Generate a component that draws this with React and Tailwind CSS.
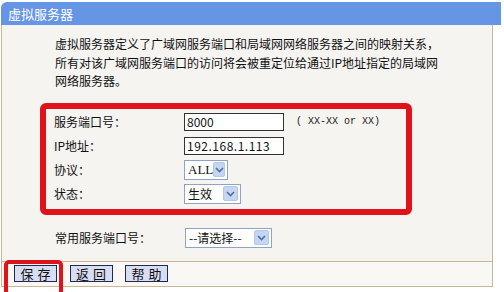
import React from "react";

function Arrow() {
  return (
    <span className="flex h-[15px] w-[15px] items-center justify-center rounded-[2px] border border-[#b5c7e6] bg-[#c6d5f0]">
      <svg width="9" height="6" viewBox="0 0 9 6">
        <path d="M1 1 L4.5 4.5 L8 1" fill="none" stroke="#4d6da8" strokeWidth="1.6" />
      </svg>
    </span>
  );
}

function Select({ text, w, serif }) {
  return (
    <div
      className={`flex h-[20px] items-center justify-between border border-[#8fa3c4] bg-white pl-[3px] pr-[2px] ${w}`}
    >
      <span className={`text-[12px] leading-none text-[#111] ${serif ? "font-['Liberation_Serif',serif] text-[13px]" : ""}`}>{text}</span>
      <Arrow />
    </div>
  );
}

function Btn({ children }) {
  return (
    <div className="flex h-[17px] w-[43px] items-center justify-center border border-[#1d2b52] bg-[#d9ddf2] text-[13px] leading-none text-[#111] tracking-[4px] pl-[4px]">
      {children}
    </div>
  );
}

export default function App() {
  return (
    <div className="relative h-[292px] w-[504px] overflow-hidden bg-white font-['Noto_Sans_CJK_SC',sans-serif] text-[#111]">
      <div className="ml-[1px] mt-[2px]">
        <div className="flex h-[23px] w-[500px] items-center rounded-tl-[6px] bg-[#6795e6] pl-[7px] text-[13px] text-white">
          虚拟服务器
        </div>
        <div className="w-[492px] border-x border-[#c9b795] bg-[#f5f4f1]">
          <div className="pl-[53px] pt-[10px] text-[12px] leading-[18.5px]">
            <div>虚拟服务器定义了广域网服务端口和局域网网络服务器之间的映射关系，</div>
            <div>所有对该广域网服务端口的访问将会被重定位给通过IP地址指定的局域网</div>
            <div>网络服务器。</div>
          </div>
          <div className="ml-[38px] mt-[12px] h-[112px] w-[372px] rounded-[6px] border-[6px] border-[#e0121a] pl-[8px] pt-[1px] text-[12px]">
            <div className="flex h-[24px] items-center">
              <div className="w-[130px]">服务端口号：</div>
              <div className="flex h-[18px] w-[100px] items-center border border-[#333] bg-white pl-[2px]">8000</div>
              <div className="ml-[12px] whitespace-pre font-['Liberation_Mono',monospace] text-[10px] text-[#222]">( XX-XX or XX)</div>
            </div>
            <div className="flex h-[24px] items-center">
              <div className="w-[130px]">IP地址：</div>
              <div className="flex h-[18px] w-[100px] items-center border border-[#333] bg-white pl-[2px] tracking-[0.5px]">192.168.1.113</div>
            </div>
            <div className="flex h-[24px] items-center">
              <div className="w-[130px]">协议：</div>
              <Select text="ALL" w="w-[44px]" serif />
            </div>
            <div className="flex h-[24px] items-center">
              <div className="w-[130px]">状态：</div>
              <Select text="生效" w="w-[57px]" />
            </div>
          </div>
          <div className="mt-[11px] flex h-[24px] items-center pl-[53px] text-[12px]">
            <div className="w-[130px]">常用服务端口号：</div>
            <Select text="--请选择--" w="w-[87px]" />
          </div>
          <div className="h-[12px] border-b border-[#c9b795]" />
          <div className="flex h-[25px] items-start gap-[12.5px] border-b border-[#c9b795] bg-[#f9f8f5] pl-[12px] pt-[3px]">
            <Btn>保存</Btn>
            <Btn>返回</Btn>
            <Btn>帮助</Btn>
          </div>
        </div>
      </div>
      <div className="absolute left-[4px] top-[260px] h-[36px] w-[59px] rounded-[5px] border-[4px] border-[#e0121a]" />
    </div>
  );
}
